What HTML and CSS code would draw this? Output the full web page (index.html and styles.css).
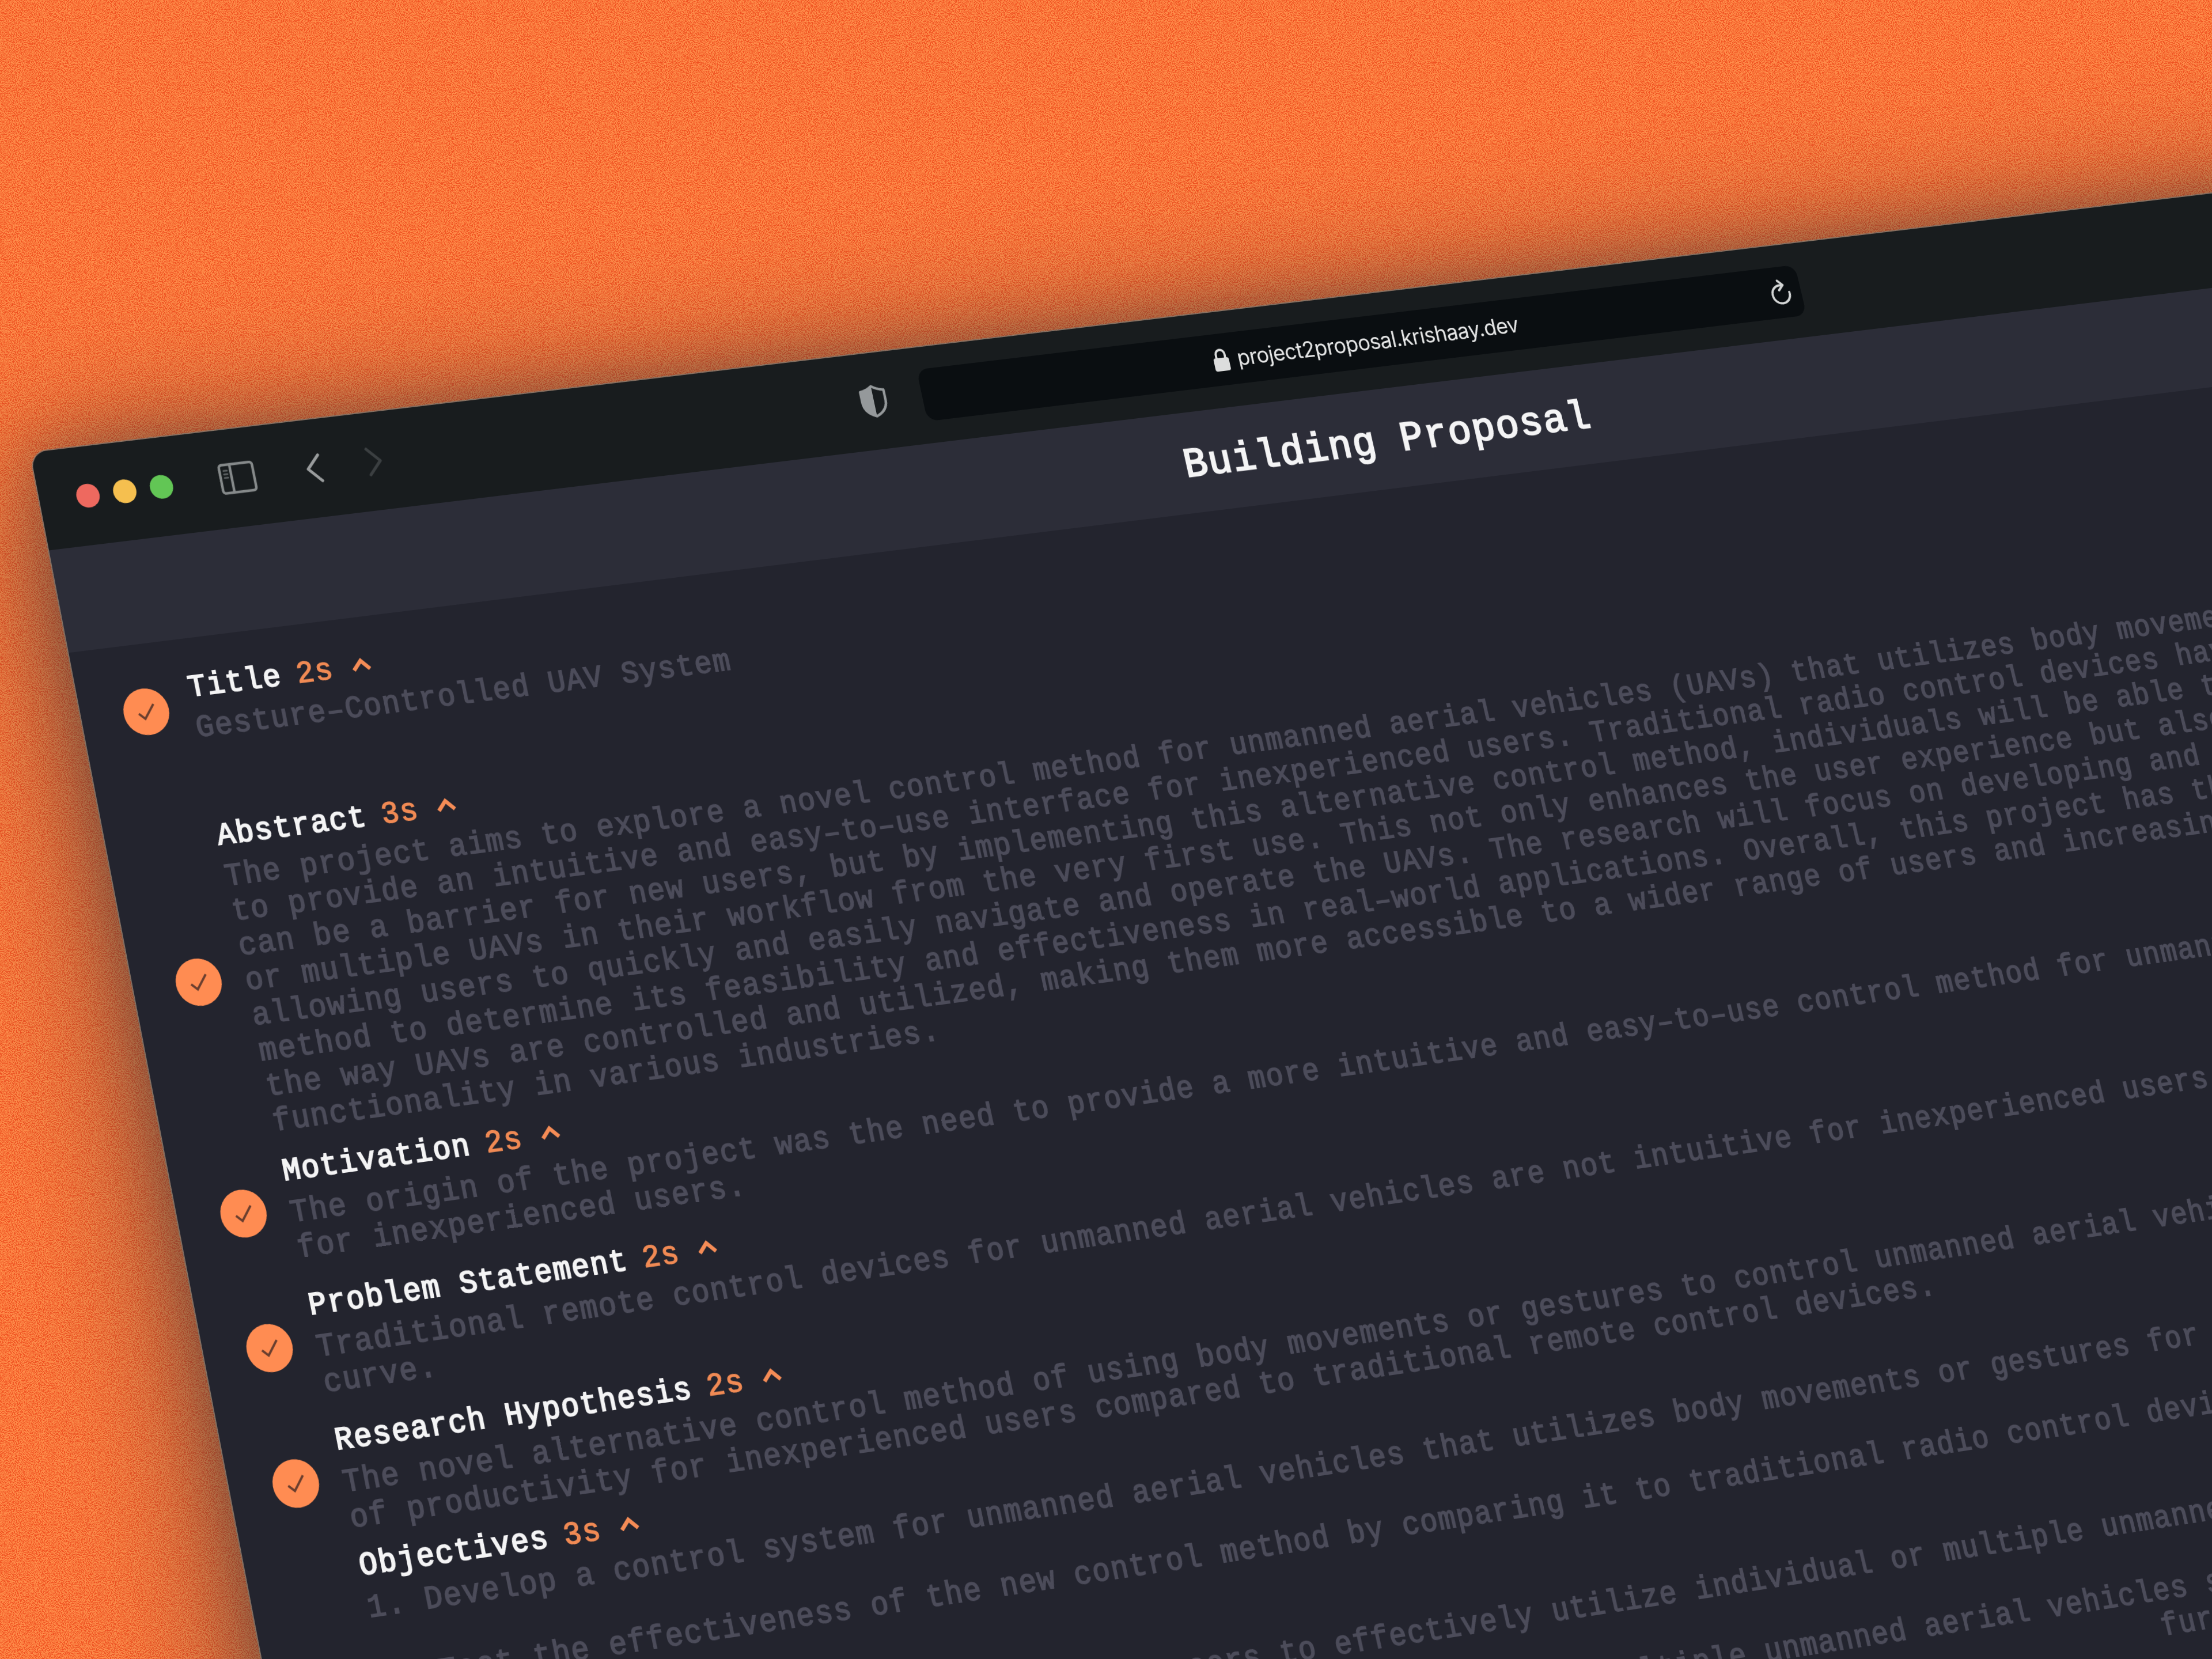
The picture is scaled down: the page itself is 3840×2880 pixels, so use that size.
FILE: index.html
```html
<!DOCTYPE html>
<html lang="en">
<head>
<meta charset="utf-8">
<title>Building Proposal</title>
<link rel="stylesheet" href="styles.css">
</head>
<body>
<svg class="grain" aria-hidden="true">
  <filter id="grain" x="0" y="0" width="100%" height="100%" color-interpolation-filters="sRGB">
    <feTurbulence type="fractalNoise" baseFrequency="0.6" numOctaves="4" seed="7"/>
    <feColorMatrix values="0 0 0 0 0.94  0 0 0 0 0.32  0 0 0 0 0.13  5.5 0 0 0 -2.4"/>
  </filter>
  <rect width="100%" height="100%" filter="url(#grain)"/>
</svg>

<main class="window">
  <header class="toolbar">
    <div class="toolbar-left">
      <div class="lights"><i class="light red"></i><i class="light yellow"></i><i class="light green"></i></div>
      <svg class="icon-sidebar" viewBox="0 0 64 54"><rect x="3" y="3" width="58" height="48" rx="5"/><path d="M22 3v48"/><path class="thin" d="M10 13h6M10 19h6M10 25h6"/></svg>
      <svg class="icon-back" viewBox="0 0 30 54"><path d="M26 5 5 27l21 22"/></svg>
      <svg class="icon-forward" viewBox="0 0 30 54"><path d="M5 5l21 22L5 49"/></svg>
      <svg class="icon-shield" viewBox="0 0 50 58"><path class="outline" d="M25 3C18 8 11 10 4 11v18c0 12 8 21 21 26 13-5 21-14 21-26V11C39 10 32 8 25 3z"/><path class="half" d="M25 3C18 8 11 10 4 11v18c0 12 8 21 21 26z"/></svg>
    </div>
    <div class="address">
      <svg class="icon-lock" viewBox="0 0 30 42"><rect x="1" y="18" width="28" height="23" rx="4"/><path d="M7 19v-7a8 8 0 0 1 16 0v7"/></svg>
      <span class="url">project2proposal.krishaay.dev</span>
      <svg class="icon-reload" viewBox="0 0 40 46"><path d="M35 24a16 16 0 1 1-14-13.500"/><path d="M17 2l8.500 8.500-8.500 8.500"/></svg>
    </div>
  </header>

  <h1 class="banner">Building Proposal</h1>

  <section class="steps">
    <article class="step step-title">
      <svg class="check" viewBox="0 0 82 82"><circle cx="41" cy="41" r="41"/><path d="M27 43l10 10 19-24"/></svg>
      <div class="text">
        <h2>Title<span class="time">2s</span><svg class="caret" viewBox="0 0 36 24"><path d="M4 20 18 5l14 15"/></svg></h2>
        <p>Gesture–Controlled UAV System</p>
      </div>
    </article>

    <article class="step step-abstract">
      <svg class="check" viewBox="0 0 82 82"><circle cx="41" cy="41" r="41"/><path d="M27 43l10 10 19-24"/></svg>
      <div class="text">
        <h2>Abstract<span class="time">3s</span><svg class="caret" viewBox="0 0 36 24"><path d="M4 20 18 5l14 15"/></svg></h2>
        <p>The project aims to explore a novel control method for unmanned aerial vehicles (UAVs) that utilizes body movements
to provide an intuitive and easy–to–use interface for inexperienced users. Traditional radio control devices have
can be a barrier for new users, but by implementing this alternative control method, individuals will be able to
or multiple UAVs in their workflow from the very first use. This not only enhances the user experience but also
allowing users to quickly and easily navigate and operate the UAVs. The research will focus on developing and
method to determine its feasibility and effectiveness in real–world applications. Overall, this project has the
the way UAVs are controlled and utilized, making them more accessible to a wider range of users and increasing
functionality in various industries.</p>
      </div>
    </article>

    <article class="step step-motivation">
      <svg class="check" viewBox="0 0 82 82"><circle cx="41" cy="41" r="41"/><path d="M27 43l10 10 19-24"/></svg>
      <div class="text">
        <h2>Motivation<span class="time">2s</span><svg class="caret" viewBox="0 0 36 24"><path d="M4 20 18 5l14 15"/></svg></h2>
        <p>The origin of the project was the need to provide a more intuitive and easy–to–use control method for unmanned
for inexperienced users.</p>
      </div>
    </article>

    <article class="step step-problem">
      <svg class="check" viewBox="0 0 82 82"><circle cx="41" cy="41" r="41"/><path d="M27 43l10 10 19-24"/></svg>
      <div class="text">
        <h2>Problem Statement<span class="time">2s</span><svg class="caret" viewBox="0 0 36 24"><path d="M4 20 18 5l14 15"/></svg></h2>
        <p>Traditional remote control devices for unmanned aerial vehicles are not intuitive for inexperienced users
curve.</p>
      </div>
    </article>

    <article class="step step-research">
      <svg class="check" viewBox="0 0 82 82"><circle cx="41" cy="41" r="41"/><path d="M27 43l10 10 19-24"/></svg>
      <div class="text">
        <h2>Research Hypothesis<span class="time">2s</span><svg class="caret" viewBox="0 0 36 24"><path d="M4 20 18 5l14 15"/></svg></h2>
        <p>The novel alternative control method of using body movements or gestures to control unmanned aerial vehicles
of productivity for inexperienced users compared to traditional remote control devices.</p>
      </div>
    </article>

    <article class="step">
      <svg class="check" viewBox="0 0 82 82"><circle cx="41" cy="41" r="41"/><path d="M27 43l10 10 19-24"/></svg>
      <div class="text">
        <h2>Objectives<span class="time">3s</span><svg class="caret" viewBox="0 0 36 24"><path d="M4 20 18 5l14 15"/></svg></h2>
        <p>1. Develop a control system for unmanned aerial vehicles that utilizes body movements or gestures for

2. Test the effectiveness of the new control method by comparing it to traditional radio control devices


3. Evaluate the ability of inexperienced users to effectively utilize individual or multiple unmanned

4. Validate the feasibility of easily controlling individual or multiple unmanned aerial vehicles simultaneously
                                                                                               further</p>
      </div>
    </article>
  </section>
</main>
</body>
</html>
```
FILE: styles.css
```css
* {
  box-sizing: border-box;
}

body {
  margin: 0;
  width: 3840px;
  height: 2880px;
  overflow: hidden;
  position: relative;
  background: #ff8e4b;
}

.grain {
  position: absolute;
  inset: 0;
  width: 100%;
  height: 100%;
}

/* The browser window is tilted in space and runs off the right and bottom edges. */
.window {
  position: absolute;
  left: 0;
  top: 0;
  width: 4760px;
  height: 3200px;
  overflow: hidden;
  border-radius: 28px;
  background: #23242e;
  transform-origin: 0 0;
  transform: matrix3d(1.00078, -0.10741, 0, 0.000014515, 0.195, 1.0079, 0, -0.0000149, 0, 0, 1, 0, 52.5, 785.8, 0, 1);
  box-shadow: 0 0 0 2px rgba(110, 122, 122, 0.6), 0 0 90px rgba(60, 60, 60, 0.3), 0 40px 300px rgba(50, 55, 60, 0.75);
}

.toolbar {
  display: grid;
  grid-template-columns: 1fr 1631px 1fr;
  align-items: center;
  height: 166px;
  background: #181c1e;
}

.toolbar-left {
  display: flex;
  align-items: center;
  padding: 0 62px 0 64px;
}

.toolbar svg {
  fill: none;
  stroke-linecap: round;
  stroke-linejoin: round;
}

.lights {
  display: flex;
  gap: 24px;
}

.light {
  width: 40px;
  height: 40px;
  border-radius: 50%;
}

.red { background: #ee695f; }
.yellow { background: #f5bf4f; }
.green { background: #62c655; }

.icon-sidebar {
  width: 64px;
  height: 54px;
  margin-left: 81px;
  stroke: #85898a;
  stroke-width: 4.500;
}

.icon-sidebar .thin {
  stroke: #5c6062;
  stroke-width: 3;
}

.icon-back {
  width: 30px;
  height: 54px;
  margin-left: 87px;
  stroke: #999c9d;
  stroke-width: 5;
}

.icon-forward {
  width: 30px;
  height: 54px;
  margin-left: 76px;
  stroke: #3b3f41;
  stroke-width: 5;
}

.icon-shield {
  width: 50px;
  height: 58px;
  margin-left: auto;
}

.icon-shield .outline {
  stroke: #95999b;
  stroke-width: 4.500;
}

.icon-shield .half {
  fill: #95999b;
}

.address {
  display: grid;
  grid-template-columns: 1fr auto auto 1fr;
  align-items: center;
  height: 90px;
  border-radius: 20px;
  background: #0a0e11;
}

.icon-lock {
  grid-column: 2;
  width: 30px;
  height: 42px;
  margin-right: 14px;
}

.icon-lock rect {
  fill: #dcdddd;
}

.icon-lock path {
  stroke: #dcdddd;
  stroke-width: 4;
}

.url {
  color: #e6e7e7;
  font: 400 38px/90px Inter, "Liberation Sans", sans-serif;
  letter-spacing: -0.7px;
}

.icon-reload {
  width: 40px;
  height: 46px;
  margin-right: 17px;
  justify-self: end;
  stroke: #d4d6d6;
  stroke-width: 4;
}

.banner {
  margin: 0;
  height: 173px;
  background: #2c2d38;
  color: #f4f4f5;
  text-align: center;
  font: 400 71px/182px "Liberation Mono", monospace;
  letter-spacing: 1.700px;
  -webkit-text-stroke: 2.500px #f4f4f5;
}

.steps {
  padding: 44px 0 0 73px;
  font-family: "Liberation Mono", monospace;
  font-size: 51px;
  letter-spacing: 1.830px;
}

.step {
  display: flex;
  align-items: center;
  gap: 40px;
}

.step-title { margin-bottom: 112px; }
.step-abstract { margin-bottom: 13px; }
.step-motivation { margin-bottom: 24.500px; }
.step-problem { margin-bottom: 25px; }
.step-research { margin-bottom: 8px; }

.check {
  flex: none;
  width: 78px;
  height: 78px;
  fill: #ff8c52;
}

.check path {
  fill: none;
  stroke: #6a3e2e;
  stroke-width: 4;
}

.step h2 {
  display: flex;
  align-items: center;
  margin: 0;
  color: #f4f4f5;
  font-size: inherit;
  font-weight: 400;
  line-height: 79px;
  -webkit-text-stroke: 2.200px #f4f4f5;
}

.time {
  margin-left: 26px;
  color: #f08a54;
  -webkit-text-stroke: 1.500px #f08a54;
}

.caret {
  width: 36px;
  height: 24px;
  margin: 0 0 8px 31px;
  fill: none;
  stroke: #f58c56;
  stroke-width: 6.500;
}

.step p {
  margin: 0;
  color: #4c4c5a;
  line-height: 58.100px;
  white-space: pre;
  -webkit-text-stroke: 1.800px #4c4c5a;
}
```
